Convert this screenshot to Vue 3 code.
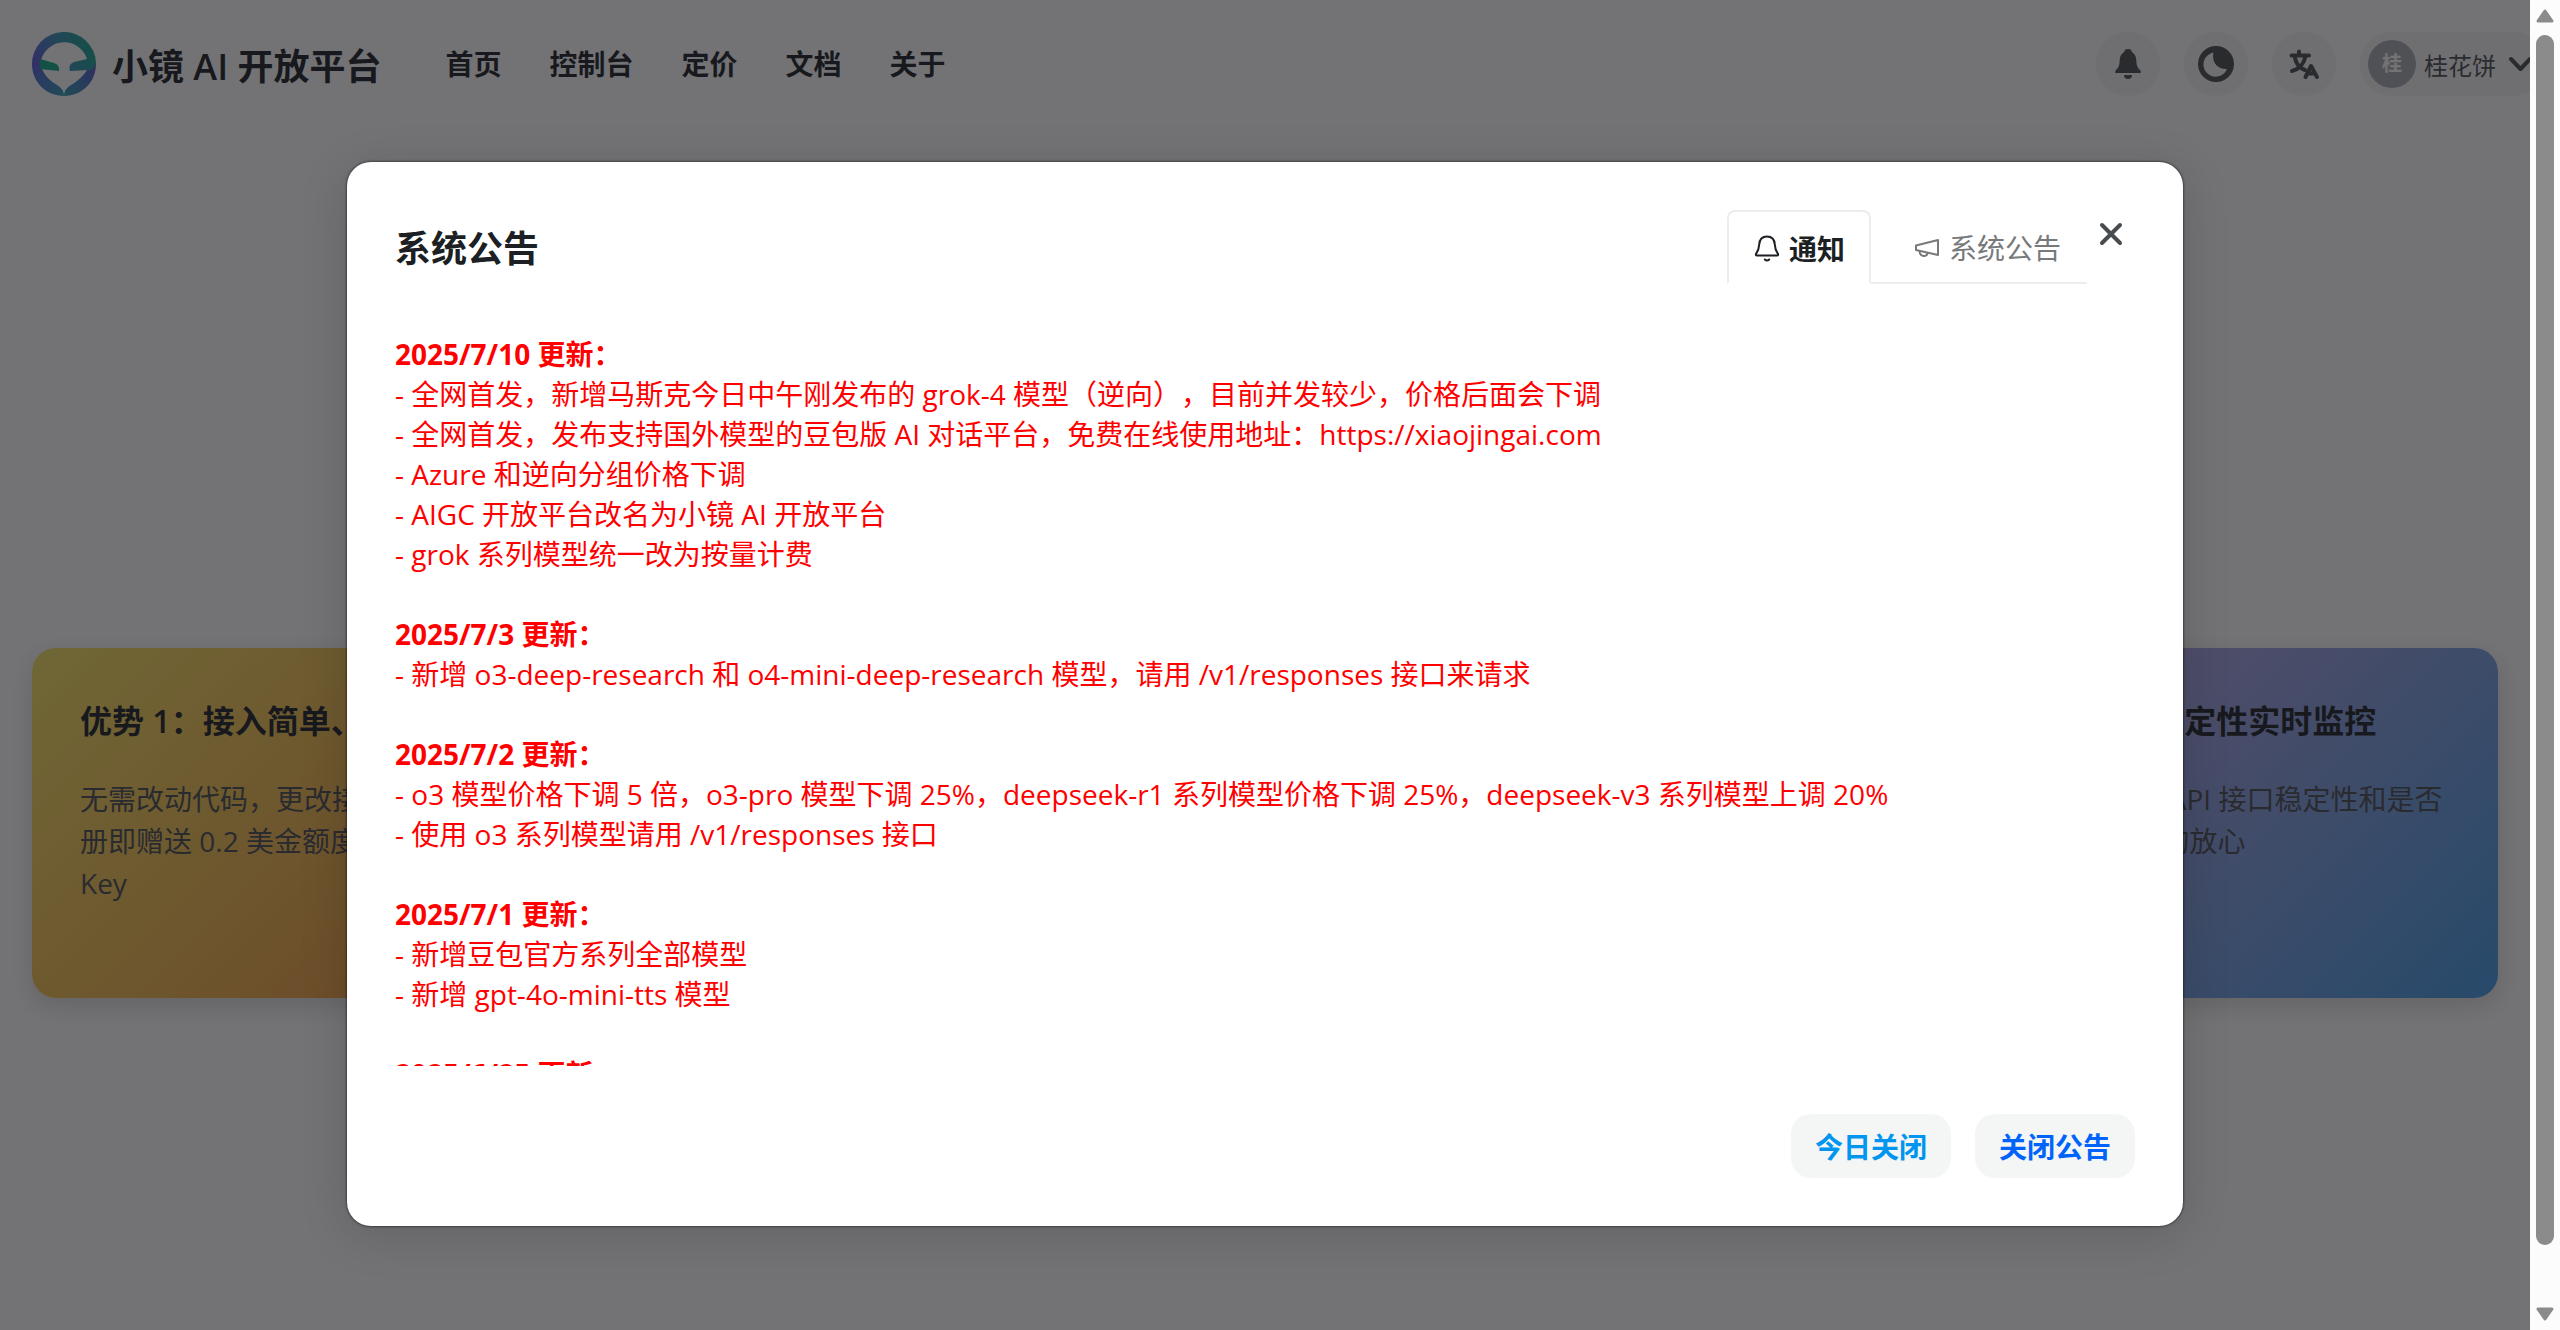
<template>
  <div class="viewport">
    <div class="page">
      <header class="header">
        <a href="#" class="brand">
          <svg class="logo" viewBox="0 0 64 64" aria-hidden="true">
            <defs>
              <linearGradient id="ring" x1="0" y1="0.6" x2="1" y2="0.3">
                <stop offset="0" stop-color="#5a58d8" />
                <stop offset="0.45" stop-color="#3a8fb4" />
                <stop offset="1" stop-color="#10a884" />
              </linearGradient>
              <linearGradient id="chinLeft" x1="0" y1="0" x2="1" y2="1">
                <stop offset="0" stop-color="#5a58d8" />
                <stop offset="1" stop-color="#2f9cae" />
              </linearGradient>
              <linearGradient id="chinRight" x1="1" y1="0" x2="0" y2="1">
                <stop offset="0" stop-color="#5a50cc" />
                <stop offset="1" stop-color="#2f9cae" />
              </linearGradient>
            </defs>
            <path fill="url(#chinLeft)" d="M0 32H9C10 42 18 49 25 53Q32 57 32 64C14 64 0 50 0 32Z" />
            <path fill="url(#chinRight)" d="M64 32C64 50 50 64 32 64Q32 57 39 53C46 49 52 43 55 38Q61 38 64 30Z" />
            <path fill="url(#ring)" d="M0 33A32 32 0 0 1 64 31Q63 37 57 38L38 39Q36 32 42 30L55 27A24 24 0 0 0 9 28V34Z" />
            <path fill="#10a884" d="M8 27L22 31Q28 33 27 39L8 37Z" />
          </svg>
          <span class="brand-name">小镜 <span class="latin">AI</span> 开放平台</span>
        </a>
        <nav class="nav">
          <a v-for="item in navItems" :key="item" href="#">{{ item }}</a>
        </nav>
        <div class="tools">
          <button class="round-btn" aria-label="通知">
            <svg width="40" height="40" viewBox="0 0 40 40" fill="currentColor">
              <path d="M20 5a4 4 0 0 0-4 3.200C12.500 10 11.800 13.500 11.600 17.500 11.400 22 10.500 23.500 7.700 26.400 6.500 27.800 7 29 8.500 29h23c1.500 0 2-1.200.8-2.600C29.500 23.500 28.600 22 28.400 17.500 28.200 13.500 27.500 10 24 8.200A4 4 0 0 0 20 5Z" />
              <path d="M16 31h8a4 4 0 0 1-8 0Z" />
            </svg>
          </button>
          <button class="round-btn" aria-label="主题">
            <svg width="40" height="40" viewBox="0 0 40 40">
              <path fill="currentColor" fill-rule="evenodd" d="M20 2a18 18 0 1 0 0 36 18 18 0 0 0 0-36ZM17.500 8.500C15.500 17 20.500 25.500 31 25A12.200 12.200 0 1 1 17.500 8.500Z" />
            </svg>
          </button>
          <button class="round-btn" aria-label="语言">
            <svg width="40" height="40" viewBox="0 0 40 40" fill="none" stroke="currentColor" stroke-width="4" stroke-linecap="round" stroke-linejoin="round">
              <path d="M7.500 11.500H25M15 7.500v4M10.500 12C12 19 14 23.500 21 26M21.500 12C20 20 16 25 8 27" />
              <path d="M21.500 33L27 22l6 11M24.500 29.500h6" />
            </svg>
          </button>
          <button class="user-btn">
            <span class="avatar">桂</span>
            <span>桂花饼</span>
            <svg class="chevron" width="26" height="26" viewBox="0 0 26 26" fill="none" stroke="currentColor" stroke-width="4" stroke-linecap="round" stroke-linejoin="round">
              <path d="M3 8l9.500 10L22 8" />
            </svg>
          </button>
        </div>
      </header>

      <main class="cards">
        <section v-for="(card, i) in cards" :key="i" class="card" :class="card.tone">
          <h3>优势 <span class="latin">{{ i + 1 }}</span>：{{ card.title }}</h3>
          <p>{{ card.text }}</p>
        </section>
      </main>

      <div class="mask">
        <div class="modal" role="dialog" aria-labelledby="notice-title">
          <div class="modal-header">
            <h2 id="notice-title">系统公告</h2>
            <div class="tabs" role="tablist">
              <button class="tab active" role="tab" aria-selected="true">
                <svg width="28" height="28" viewBox="0 0 28 28" fill="none" stroke="currentColor" stroke-width="2" stroke-linecap="round" stroke-linejoin="round">
                  <path d="M14 2.500C9 2.500 6.500 6 6.200 10.500 6 15 5 17 3.200 19.600 2.500 20.700 3 21.500 4 21.500h20c1 0 1.500-.8.800-1.900C23 17 22 15 21.800 10.500 21.500 6 19 2.500 14 2.500Z" />
                  <path d="M11.800 25.500q2.200 2 4.400 0" />
                </svg>
                通知
              </button>
              <button class="tab" role="tab" aria-selected="false">
                <svg width="28" height="28" viewBox="0 0 28 28" fill="none" stroke="currentColor" stroke-width="2" stroke-linejoin="round">
                  <path d="M3 12.500L25 7v15L3 17Z" />
                  <path d="M6.500 18c0 6 8 6.500 8 1.800" />
                </svg>
                系统公告
              </button>
            </div>
            <button class="close-btn" aria-label="关闭">
              <svg width="24" height="24" viewBox="0 0 24 24" fill="none" stroke="currentColor" stroke-width="4" stroke-linecap="round">
                <path d="M3 3l18 18M21 3L3 21" />
              </svg>
            </button>
          </div>

          <div class="notice">
            <section v-for="log in logs" :key="log.date">
              <h4>{{ log.date }} 更新：</h4>
              <p v-for="line in log.lines" :key="line">- {{ line }}</p>
            </section>
          </div>

          <div class="modal-footer">
            <button class="btn today">今日关闭</button>
            <button class="btn primary">关闭公告</button>
          </div>
        </div>
      </div>
    </div>

    <div class="scrollbar" aria-hidden="true">
      <svg width="18" height="14" viewBox="0 0 18 14"><path d="M9 2L16 12H2Z" /></svg>
      <div class="track"><div class="thumb"></div></div>
      <svg width="18" height="14" viewBox="0 0 18 14"><path d="M2 2H16L9 12Z" /></svg>
    </div>
  </div>
</template>

<script setup>
const navItems = ['首页', '控制台', '定价', '文档', '关于']

const cards = [
  { tone: 'yellow', title: '接入简单、使用方便', text: '无需改动代码，更改接口地址即可，注册即赠送 0.2 美金额度，支持创建多个 Key' },
  { tone: 'green', title: '模型齐全', text: '支持多种主流模型' },
  { tone: 'pink', title: '价格实惠', text: '按量计费' },
  { tone: 'blue', title: '接口稳定性实时监控', text: '可实时监控各个 API 接口稳定性和是否可用，让您使用的放心' }
]

const logs = [
  {
    date: '2025/7/10',
    lines: [
      '全网首发，新增马斯克今日中午刚发布的 grok-4 模型（逆向），目前并发较少，价格后面会下调',
      '全网首发，发布支持国外模型的豆包版 AI 对话平台，免费在线使用地址：https://xiaojingai.com',
      'Azure 和逆向分组价格下调',
      'AIGC 开放平台改名为小镜 AI 开放平台',
      'grok 系列模型统一改为按量计费'
    ]
  },
  {
    date: '2025/7/3',
    lines: ['新增 o3-deep-research 和 o4-mini-deep-research 模型，请用 /v1/responses 接口来请求']
  },
  {
    date: '2025/7/2',
    lines: [
      'o3 模型价格下调 5 倍，o3-pro 模型下调 25%，deepseek-r1 系列模型价格下调 25%，deepseek-v3 系列模型上调 20%',
      '使用 o3 系列模型请用 /v1/responses 接口'
    ]
  },
  {
    date: '2025/7/1',
    lines: ['新增豆包官方系列全部模型', '新增 gpt-4o-mini-tts 模型']
  },
  { date: '2025/6/25', lines: [] }
]
</script>

<style>
body {
  margin: 0;
}
</style>

<style scoped>
.viewport {
  display: flex;
  height: 100vh;
  overflow: hidden;
  font-family: "Open Sans", "Noto Sans CJK SC", sans-serif;
  text-spacing-trim: space-all;
  color: #1c1f23;
  background: #fff;
}
button {
  border: none;
  padding: 0;
  background: none;
  font-family: inherit;
  color: inherit;
  cursor: pointer;
}
a {
  color: inherit;
  text-decoration: none;
}
h2, h3, h4, p {
  margin: 0;
}
.page {
  flex: 1;
  min-width: 0;
  position: relative;
  overflow: hidden;
}

.header {
  display: flex;
  align-items: center;
  height: 128px;
  padding-left: 32px;
}
.brand {
  display: flex;
  align-items: center;
  gap: 16px;
}
.logo {
  width: 64px;
  height: 64px;
}
.brand-name {
  font-size: 36px;
  font-weight: 700;
  white-space: nowrap;
}
.latin {
  font-weight: 600;
}
.nav {
  display: flex;
  gap: 48px;
  margin-left: 64px;
  font-size: 28px;
  line-height: 36px;
  font-weight: 700;
}
.tools {
  display: flex;
  gap: 24px;
  margin-left: auto;
  margin-right: -16px;
  color: #494c4f;
}
.round-btn {
  display: flex;
  align-items: center;
  justify-content: center;
  width: 64px;
  height: 64px;
  border-radius: 50%;
  background: #f4f6f6;
}
.user-btn {
  display: flex;
  align-items: center;
  gap: 8px;
  height: 64px;
  padding: 0 12px 0 8px;
  border-radius: 32px;
  background: #f4f6f6;
  font-size: 24px;
  white-space: nowrap;
}
.avatar {
  width: 48px;
  line-height: 48px;
  border-radius: 50%;
  background: #a7abb0;
  color: #fff;
  font-size: 20px;
  font-weight: 700;
}
.chevron {
  margin-left: 4px;
}

.cards {
  display: grid;
  grid-template-columns: repeat(4, 1fr);
  gap: 48px;
  margin-top: 520px;
  padding: 0 32px;
}
.card {
  box-sizing: border-box;
  min-height: 350px;
  padding: 48px;
  border-radius: 24px;
  box-shadow: 0 8px 24px rgba(0, 0, 0, 0.15);
}
.card h3 {
  margin-bottom: 32px;
  font-size: 32px;
  line-height: 50px;
  white-space: nowrap;
}
.card p {
  font-size: 28px;
  line-height: 42px;
  color: #494c4f;
}
.yellow {
  background: linear-gradient(135deg, #f6e05e, #ed8936);
}
.green {
  background: linear-gradient(135deg, #9ae6b4, #38b2ac);
}
.pink {
  background: linear-gradient(135deg, #fbb6ce, #ed64a6);
}
.blue {
  background: linear-gradient(135deg, #d0a4dc, #4299e1);
}

.mask {
  position: absolute;
  inset: 0;
  padding: 162px 32px 0;
  background: rgba(22, 22, 26, 0.6);
}
.modal {
  box-sizing: border-box;
  max-width: 1836px;
  margin: 0 auto;
  padding: 48px;
  border-radius: 24px;
  background: #fff;
  box-shadow: 0 0 2px 1px rgba(0, 0, 0, 0.4), 0 8px 48px rgba(0, 0, 0, 0.15);
}
.modal-header {
  display: flex;
  align-items: flex-start;
}
.modal-header h2 {
  flex: 1;
  padding-top: 2px;
  font-size: 36px;
  line-height: 74px;
}
.tabs {
  display: flex;
}
.tab {
  display: flex;
  align-items: center;
  gap: 8px;
  box-sizing: border-box;
  height: 74px;
  padding: 2px 26px 0;
  border-bottom: 2px solid #ededee;
  font-size: 28px;
  color: #77797b;
}
.tab + .tab {
  padding-left: 42px;
}
.tab.active {
  padding: 2px 24px 0;
  border: 2px solid #ededee;
  border-bottom-color: #fff;
  border-radius: 8px 8px 0 0;
  color: #1c1f23;
  font-weight: 700;
}
.close-btn {
  display: flex;
  align-items: center;
  justify-content: center;
  width: 48px;
  height: 48px;
  color: #494c4f;
}
.notice {
  height: 55vh;
  margin: 48px 0;
  overflow: hidden;
  font-size: 28px;
  line-height: 40px;
  color: #f00;
}
.notice section {
  margin-bottom: 40px;
}
.modal-footer {
  display: flex;
  justify-content: flex-end;
  gap: 24px;
}
.btn {
  height: 64px;
  padding: 0 24px;
  border-radius: 20px;
  background: #f4f6f6;
  font-size: 28px;
  font-weight: 700;
}
.today {
  color: #0095ee;
}
.primary {
  color: #0064fa;
}

.scrollbar {
  display: flex;
  flex-direction: column;
  align-items: center;
  gap: 12px;
  box-sizing: border-box;
  width: 30px;
  padding: 9px 0;
  background: #fcfcfc;
}
.scrollbar path {
  fill: #8b8b8b;
  stroke: #8b8b8b;
  stroke-width: 3;
  stroke-linejoin: round;
}
.track {
  flex: 1;
}
.thumb {
  width: 18px;
  height: 96%;
  border-radius: 9px;
  background: #8b8b8b;
}
</style>
